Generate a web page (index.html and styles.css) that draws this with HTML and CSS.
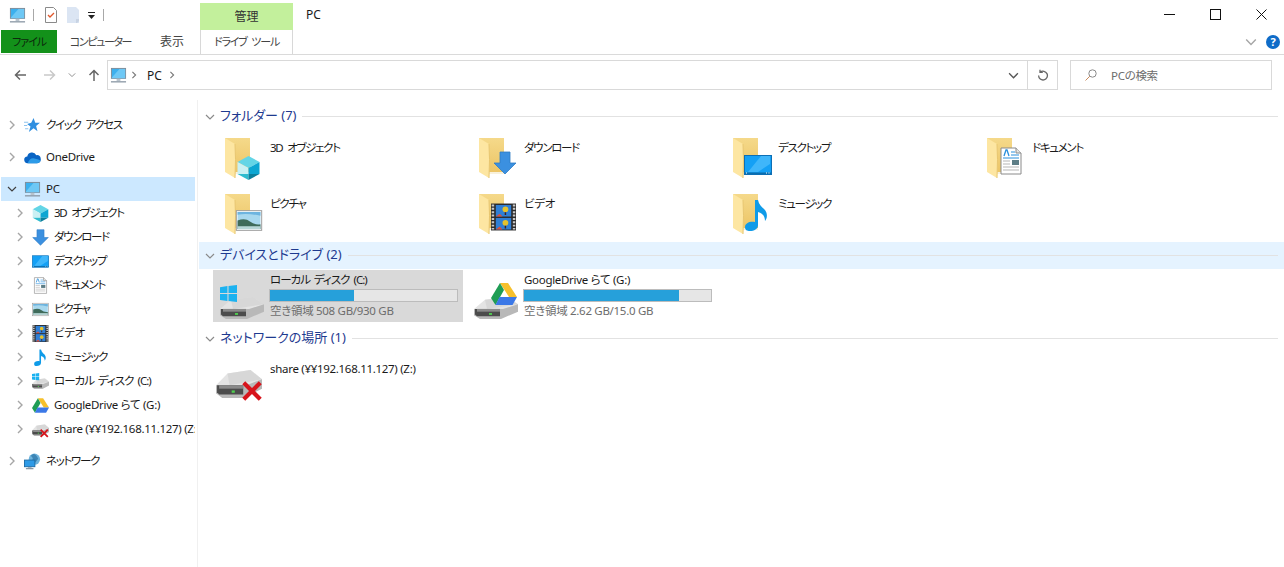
FILE: index.html
```html
<!DOCTYPE html>
<html lang="ja">
<head>
    <meta charset="UTF-8">
    <title>PC</title>
    <link rel="stylesheet" href="styles.css">
</head>
<body>
    <!-- Shared icons -->
    <svg class="sprites" xmlns="http://www.w3.org/2000/svg">
        <defs>
            <linearGradient id="folder-back" x1="0" y1="0" x2="0" y2="1">
                <stop offset="0" stop-color="#f5d98a"/>
                <stop offset="1" stop-color="#ecc566"/>
            </linearGradient>
        </defs>
        <symbol id="chev-r" viewBox="0 0 10 10"><path d="M3 1l4 4-4 4" fill="none" stroke="currentColor" stroke-width="1.4"/></symbol>
        <symbol id="chev-d" viewBox="0 0 10 10"><path d="M1 3l4 4 4-4" fill="none" stroke="currentColor" stroke-width="1.2"/></symbol>
        <symbol id="pc" viewBox="0 0 18 18">
            <rect x="1.5" y="1.5" width="15" height="10.5" fill="#3cb0ee" stroke="#7d8c99"/>
            <path d="M2 11l8-9h6v10H2z" fill="#6ec8f5"/>
            <rect x="7" y="12.5" width="4" height="2.5" fill="#b9c3cc"/>
            <rect x="1" y="15" width="16" height="1.4" fill="#8b99a6"/>
        </symbol>
        <symbol id="folder" viewBox="0 0 48 48">
            <path d="M3 3h25v34H3z" fill="url(#folder-back)"/>
            <path d="M13 37h15v2H13z" fill="#f8f1dc"/>
            <path d="M3 3l10 6q1 14 0 34L3 37z" fill="#fde6a2"/>
            <path d="M13 9q1 14 0 34" fill="none" stroke="#e8c670"/>
        </symbol>
        <symbol id="cube" viewBox="0 0 24 24">
            <path d="M12 0l11 6-11 6L1 6z" fill="#63d5e6"/>
            <path d="M1 6l11 6v6H1z" fill="#c9f0f3"/>
            <path d="M23 6l-11 6v6h11z" fill="#0ca6d2"/>
            <path d="M1 18h11v6z" fill="#2fbccf"/>
            <path d="M23 18H12v6z" fill="#0b7f9c"/>
        </symbol>
        <symbol id="arrow" viewBox="0 0 24 24">
            <path d="M7 1h10v11h6L12 23 1 12h6z" fill="#3b90e0" stroke="#2f7cc4" stroke-width=".8"/>
        </symbol>
        <symbol id="desktop" viewBox="0 0 28 20">
            <rect x=".5" y=".5" width="27" height="19" fill="#14a0f5" stroke="#0d6fb5"/>
            <path d="M4 17L17 1h9v8L14 17z" fill="#3fb6fa"/>
            <rect x="1" y="17.5" width="26" height="1.5" fill="#0b6dad"/>
            <path d="M2 18h1M22 18h1M24.500 18h1" stroke="#fff"/>
        </symbol>
        <symbol id="doc" viewBox="0 0 22 28">
            <path d="M1 1h15l5 5v21H1z" fill="#fff" stroke="#8a8a8a"/>
            <path d="M16 1v5h5" fill="#e4e4e4" stroke="#8a8a8a"/>
            <path d="M4 9l2-6h1l2 6" fill="none" stroke="#2a8fdc" stroke-width="1.3"/>
            <path d="M11 5h4M11 8h8M3 11h16" stroke="#2a8fdc"/>
            <path d="M3 14h7M3 17h7M3 20h16M3 23h16" stroke="#b5b5b5"/>
            <rect x="12" y="13" width="7" height="5" fill="#5d7d86"/>
        </symbol>
        <symbol id="picture" viewBox="0 0 28 22">
            <rect x=".7" y=".7" width="26.600" height="20.600" fill="#fff" stroke="#9a9a9a"/>
            <rect x="2" y="2" width="24" height="18" fill="#a8d8ee"/>
            <path d="M2 5q10-2 24 1v-4H2z" fill="#6db4df"/>
            <path d="M2 11q8-3 13 1t11 3v5H2z" fill="#3f6b5a"/>
            <path d="M2 17h24v3H2z" fill="#b7d6d6"/>
        </symbol>
        <symbol id="film" viewBox="0 0 26 28">
            <rect width="26" height="28" fill="#2c2c2c"/>
            <path d="M2 1v26M24 1v26" stroke="#c9c9c9" stroke-width="2.600" stroke-dasharray="2 1.500"/>
            <rect x="5" y="1.500" width="16" height="12" fill="#2f7fd6"/>
            <rect x="5" y="15" width="16" height="12" fill="#2f7fd6"/>
            <path d="M5 13.500l4-3 3 3zM5 27l4-3 3 3z" fill="#d8503c"/>
            <circle cx="15" cy="6" r="3" fill="#e5c22c"/>
            <circle cx="15" cy="20" r="3" fill="#e5c22c"/>
            <path d="M15 9v3M15 23v3" stroke="#402020" stroke-width="1.500"/>
        </symbol>
        <symbol id="note" viewBox="0 0 24 32">
            <path d="M10 1h3c1 5 4 7 7 10 3 4 2 9 0 11 0-4-2-8-7-9v13c0 4-4 6-8 6-3 0-5-1-5-4 0-4 5-6 10-5z" fill="#0f9be8"/>
        </symbol>
        <symbol id="star" viewBox="0 0 16 16">
            <path d="M9 1l1.600 4.500H15l-3.600 3 1.300 5L9 10.700 4.600 14l1.500-5L3 6.500l3.800-1z" fill="#2f8fe0"/>
            <path d="M0 5h4M0 8h3M1 11h3" stroke="#8fc4ee"/>
        </symbol>
        <symbol id="cloud" viewBox="0 0 18 12">
            <path d="M4 12a3.500 3.500 0 0 1-.5-7A5 5 0 0 1 13 3.500 4.200 4.200 0 0 1 14 12z" fill="#0a64c4"/>
            <path d="M4 12q2-6 7-5t6.500 2.500Q17 12 14 12z" fill="#2c9be8"/>
        </symbol>
        <symbol id="disk" viewBox="0 0 44 24" preserveAspectRatio="none">
            <path d="M0 13L11 3l22-3 11 8v8L11 24 0 20z" fill="#e4e4e4"/>
            <path d="M11 3l22-3 11 8-31 5z" fill="#d2d2d2" opacity=".7"/>
            <path d="M0 13h29l15-5v8L27 24H6l-6-4z" fill="#b8b8b8"/>
            <path d="M1 13h25v8H3l-2-2z" fill="#4c4c4c"/>
            <path d="M3 13h23v3H3z" fill="#8a8a8a"/>
            <rect x="15" y="17.500" width="3" height="2" fill="#4fd04f"/>
        </symbol>
        <symbol id="win" viewBox="0 0 16 16">
            <path d="M0 2l7-1v6.500H0zM8 1l8-1v7.500H8zM0 8.500h7V15l-7-1zM8 8.500h8V16l-8-1z" fill="#1cb2f0"/>
        </symbol>
        <symbol id="gdrive" viewBox="0 0 26 24">
            <path d="M9 1h8l9 14h-8z" fill="#f6c02c"/>
            <path d="M9 1l4 7-8.500 15L0 16z" fill="#1f9d55"/>
            <path d="M8.500 15H26l-4.500 8H4.500z" fill="#3b78e7"/>
        </symbol>
        <symbol id="redx" viewBox="0 0 24 24">
            <path d="M3 3l18 18M21 3L3 21" stroke="#d7141c" stroke-width="4.600"/>
        </symbol>
        <symbol id="globe" viewBox="0 0 18 18">
            <circle cx="11" cy="6.500" r="6" fill="#6db3dc"/>
            <path d="M7 3q3 2 2 4t3 3l3-4q-2-5-5-5z" fill="#3d85b5"/>
            <rect x=".5" y="7.500" width="11" height="7" fill="#2e9ae6" stroke="#1d6ea8"/>
            <rect x="4" y="15" width="4" height="1.200" fill="#9aa7b2"/>
            <rect x="2" y="16" width="8" height="1.200" fill="#7d8c99"/>
        </symbol>
    </svg>

    <!-- Title bar -->
    <header class="titlebar">
        <div class="qat">
            <svg class="qat-pc"><use href="#pc"/></svg>
            <span class="qat-sep"></span>
            <svg class="qat-doc" viewBox="0 0 12 16">
                <path d="M.5.500h8l3 3v12H.5z" fill="#fff" stroke="#8a8a8a"/>
                <path d="M3 8l2 2 4-4" fill="none" stroke="#e0562a" stroke-width="1.300"/>
            </svg>
            <svg class="qat-blank" viewBox="0 0 12 16">
                <path d="M0 0h9l3 3v13H0z" fill="#dbe5f3"/>
                <path d="M9 12h3v2l-2 2H9z" fill="#c8d3e3"/>
            </svg>
            <svg class="qat-drop" viewBox="0 0 7 7"><path d="M0 0h7v1H0zM0 3h7L3.500 7z" fill="#222"/></svg>
            <span class="qat-sep"></span>
        </div>
        <div class="manage-tab">管理</div>
        <div class="window-title">PC</div>
        <div class="window-btns">
            <div class="window-btn"><svg viewBox="0 0 11 11"><path d="M0 5.500h11" stroke="#111"/></svg></div>
            <div class="window-btn"><svg viewBox="0 0 11 11"><rect x=".5" y=".5" width="10" height="10" fill="none" stroke="#111"/></svg></div>
            <div class="window-btn"><svg viewBox="0 0 11 11"><path d="M.5.500l10 10M10.500.500l-10 10" stroke="#111"/></svg></div>
        </div>
    </header>

    <!-- Ribbon tabs -->
    <nav class="ribbon">
        <div class="tab tab-file">ファイル</div>
        <div class="tab tab-computer">コンピューター</div>
        <div class="tab tab-view">表示</div>
        <div class="tab tab-drive">ドライブ ツール</div>
        <div class="ribbon-right">
            <svg class="ribbon-chev"><use href="#chev-d"/></svg>
            <div class="help">?</div>
        </div>
    </nav>

    <!-- Address row -->
    <div class="addressrow">
        <svg class="nav-btn back" viewBox="0 0 12 12"><path d="M12 6H1.500M6 1.500L1.500 6 6 10.500" fill="none" stroke="currentColor" stroke-width="1.500"/></svg>
        <svg class="nav-btn forward" viewBox="0 0 12 12"><path d="M0 6h10.500M6 1.500L10.500 6 6 10.500" fill="none" stroke="currentColor" stroke-width="1.500"/></svg>
        <svg class="nav-recent"><use href="#chev-d"/></svg>
        <svg class="nav-btn up" viewBox="0 0 12 12"><path d="M6 12V1.500M1.500 6L6 1.500 10.500 6" fill="none" stroke="currentColor" stroke-width="1.500"/></svg>
        <div class="address">
            <svg class="address-pc"><use href="#pc"/></svg>
            <svg class="crumb-chev"><use href="#chev-r"/></svg>
            <span class="crumb">PC</span>
            <svg class="crumb-chev"><use href="#chev-r"/></svg>
            <svg class="address-drop"><use href="#chev-d"/></svg>
            <div class="refresh">
                <svg viewBox="0 0 12 12"><path d="M3.200 3.200A4.400 4.400 0 1 1 1.600 6.600M3 .8v2.600h2.800" fill="none" stroke="#666" stroke-width="1.300"/></svg>
            </div>
        </div>
        <div class="search">
            <svg viewBox="0 0 12 12"><circle cx="7.500" cy="4.500" r="3.700" fill="none" stroke="#8a8a8a"/><path d="M4.800 7.200L.5 11.500" stroke="#c98a5e"/></svg>
            <span>PCの検索</span>
        </div>
    </div>

    <div class="main">
        <!-- Navigation pane -->
        <aside class="navpane">
            <div class="navrow gap-after"><svg class="tree"><use href="#chev-r"/></svg><svg class="navicon"><use href="#star"/></svg><span class="kana">クイック アクセス</span></div>
            <div class="navrow gap-after"><svg class="tree"><use href="#chev-r"/></svg><svg class="navicon"><use href="#cloud"/></svg><span>OneDrive</span></div>
            <div class="navrow selected"><svg class="tree open"><use href="#chev-d"/></svg><svg class="navicon"><use href="#pc"/></svg><span>PC</span></div>
            <div class="navrow sub"><svg class="tree"><use href="#chev-r"/></svg><svg class="navicon"><use href="#cube"/></svg><span class="kana">3D オブジェクト</span></div>
            <div class="navrow sub"><svg class="tree"><use href="#chev-r"/></svg><svg class="navicon"><use href="#arrow"/></svg><span class="kana">ダウンロード</span></div>
            <div class="navrow sub"><svg class="tree"><use href="#chev-r"/></svg><svg class="navicon"><use href="#desktop"/></svg><span class="kana">デスクトップ</span></div>
            <div class="navrow sub"><svg class="tree"><use href="#chev-r"/></svg><svg class="navicon"><use href="#doc"/></svg><span class="kana">ドキュメント</span></div>
            <div class="navrow sub"><svg class="tree"><use href="#chev-r"/></svg><svg class="navicon"><use href="#picture"/></svg><span class="kana">ピクチャ</span></div>
            <div class="navrow sub"><svg class="tree"><use href="#chev-r"/></svg><svg class="navicon"><use href="#film"/></svg><span>ビデオ</span></div>
            <div class="navrow sub"><svg class="tree"><use href="#chev-r"/></svg><svg class="navicon"><use href="#note"/></svg><span class="kana">ミュージック</span></div>
            <div class="navrow sub">
                <svg class="tree"><use href="#chev-r"/></svg>
                <svg class="navicon" viewBox="0 0 16 16"><use href="#disk" y="5" width="16" height="10"/><use href="#win" width="7" height="7"/></svg>
                <span class="kana-mixed">ローカル ディスク (C:)</span>
            </div>
            <div class="navrow sub"><svg class="tree"><use href="#chev-r"/></svg><svg class="navicon"><use href="#gdrive"/></svg><span>GoogleDrive らて (G:)</span></div>
            <div class="navrow sub gap-after">
                <svg class="tree"><use href="#chev-r"/></svg>
                <svg class="navicon" viewBox="0 0 16 16"><use href="#disk" y="3" width="16" height="11"/><use href="#redx" x="7" y="7" width="9" height="9"/></svg>
                <span>share (¥¥192.168.11.127) (Z:)</span>
            </div>
            <div class="navrow"><svg class="tree"><use href="#chev-r"/></svg><svg class="navicon"><use href="#globe"/></svg><span class="kana">ネットワーク</span></div>
        </aside>

        <!-- Content -->
        <main class="content">
            <div class="group-head">
                <svg class="group-chev"><use href="#chev-d"/></svg>
                <span>フォルダー (7)</span><i></i>
            </div>
            <div class="folders">
                <div class="folder">
                    <svg viewBox="0 0 48 48"><use href="#folder" width="48" height="48"/><use href="#cube" x="14" y="21" width="25" height="24"/></svg>
                    <span class="kana">3D オブジェクト</span>
                </div>
                <div class="folder">
                    <svg viewBox="0 0 48 48"><use href="#folder" width="48" height="48"/><use href="#arrow" x="17" y="16" width="24" height="24"/></svg>
                    <span class="kana">ダウンロード</span>
                </div>
                <div class="folder">
                    <svg viewBox="0 0 48 48"><use href="#folder" width="48" height="48"/><use href="#desktop" x="14" y="20" width="28" height="20"/></svg>
                    <span class="kana">デスクトップ</span>
                </div>
                <div class="folder">
                    <svg viewBox="0 0 48 48"><use href="#folder" width="48" height="48"/><use href="#doc" x="16" y="12" width="22" height="28"/></svg>
                    <span class="kana">ドキュメント</span>
                </div>
                <div class="folder">
                    <svg viewBox="0 0 48 48"><use href="#folder" width="48" height="48"/><use href="#picture" x="13" y="19" width="28" height="21"/></svg>
                    <span class="kana">ピクチャ</span>
                </div>
                <div class="folder">
                    <svg viewBox="0 0 48 48"><use href="#folder" width="48" height="48"/><use href="#film" x="15" y="12" width="25" height="28"/></svg>
                    <span>ビデオ</span>
                </div>
                <div class="folder">
                    <svg viewBox="0 0 48 48"><use href="#folder" width="48" height="48"/><use href="#note" x="15" y="8" width="24" height="32"/></svg>
                    <span class="kana">ミュージック</span>
                </div>
            </div>

            <div class="group-head hot">
                <svg class="group-chev"><use href="#chev-d"/></svg>
                <span>デバイスとドライブ (2)</span><i></i>
            </div>
            <div class="drives">
                <div class="drive picked">
                    <svg viewBox="0 0 48 48"><use href="#disk" x="2" y="24" width="44" height="22"/><use href="#win" x="2" y="12" width="17" height="17"/></svg>
                    <div class="drive-info">
                        <div class="kana-mixed">ローカル ディスク (C:)</div>
                        <div class="bar"><div class="bar-fill" style="width: 45%"></div></div>
                        <div class="free">空き領域 508 GB/930 GB</div>
                    </div>
                </div>
                <div class="drive">
                    <svg viewBox="0 0 48 48"><use href="#disk" x="2" y="24" width="44" height="22"/><use href="#gdrive" x="19" y="9" width="26" height="24"/></svg>
                    <div class="drive-info">
                        <div>GoogleDrive らて (G:)</div>
                        <div class="bar"><div class="bar-fill" style="width: 83%"></div></div>
                        <div class="free">空き領域 2.62 GB/15.0 GB</div>
                    </div>
                </div>
            </div>

            <div class="group-head">
                <svg class="group-chev"><use href="#chev-d"/></svg>
                <span>ネットワークの場所 (1)</span><i></i>
            </div>
            <div class="drive network">
                <svg viewBox="0 0 48 48"><use href="#disk" x="1" y="10" width="46" height="28"/><use href="#redx" x="26" y="20" width="22" height="22"/></svg>
                <div class="drive-info"><div>share (¥¥192.168.11.127) (Z:)</div></div>
            </div>
        </main>
    </div>
</body>
</html>
```

FILE: styles.css
```css
body {
    margin: 0;
    width: 1284px;
    height: 567px;
    overflow: hidden;
    background-color: #fff;
    color: #1a1a1a;
    font-family: "Noto Sans", "Noto Sans CJK JP", sans-serif;
    font-size: 11.5px;
    letter-spacing: -0.3px;
    font-feature-settings: "palt";
}

svg {
    display: block;
    flex: none;
}

.sprites {
    width: 0;
    height: 0;
    position: absolute;
}

/* Katakana runs wider in this font than in the original UI font */
.kana {
    letter-spacing: -1.3px;
    word-spacing: 3px;
}

.kana-mixed {
    letter-spacing: -1px;
    word-spacing: 2px;
}

/* Title bar */
.titlebar {
    display: flex;
    height: 30px;
}

.qat {
    display: flex;
    align-items: center;
    width: 200px;
    padding-left: 9px;
    box-sizing: border-box;
}

.qat-pc {
    width: 17px;
    height: 17px;
}

.qat-sep {
    width: 1px;
    height: 12px;
    background-color: #a8a8a8;
    margin-left: 7px;
}

.qat-doc {
    width: 12px;
    height: 16px;
    margin-left: 11px;
}

.qat-blank {
    width: 12px;
    height: 16px;
    margin-left: 10px;
}

.qat-drop {
    width: 7px;
    height: 7px;
    margin-left: 9px;
    margin-right: 1px;
}

.manage-tab {
    width: 93px;
    height: 27px;
    margin-top: 3px;
    background-color: #c3f09c;
    text-align: center;
    line-height: 28px;
    color: #333;
    font-size: 12px;
    letter-spacing: 0;
}

.window-title {
    margin-left: 13px;
    line-height: 29px;
    font-size: 12px;
    letter-spacing: 0;
    flex: 1;
}

.window-btns {
    display: flex;
}

.window-btn {
    width: 46px;
    height: 30px;
    display: flex;
    align-items: center;
    justify-content: center;
}

.window-btn svg {
    width: 11px;
    height: 11px;
    margin-top: -2px;
}

/* Ribbon tabs */
.ribbon {
    display: flex;
    height: 24px;
    padding-left: 1px;
    border-bottom: 1px solid #dadada;
    color: #444;
}

.tab {
    height: 23px;
    line-height: 23px;
    text-align: center;
    box-sizing: border-box;
    font-size: 11px;
    letter-spacing: -1px;
}

.tab-file {
    width: 56px;
    background-color: #13911a;
    color: #0c2a0c;
}

.tab-computer {
    width: 87px;
    letter-spacing: -1.4px;
}

.tab-view {
    width: 56px;
    font-size: 12px;
    letter-spacing: 0;
}

.tab-drive {
    width: 93px;
    height: 24px;
    border-left: 1px solid #d8d8d8;
    border-right: 1px solid #d8d8d8;
    background-color: #fff;
    letter-spacing: -1.2px;
    word-spacing: 3px;
}

.ribbon-right {
    flex: 1;
    display: flex;
    justify-content: flex-end;
    align-items: center;
    padding-right: 4px;
    height: 24px;
}

.ribbon-chev {
    width: 12px;
    height: 12px;
    color: #a6a6a6;
    margin-right: 9px;
}

.help {
    width: 14px;
    height: 14px;
    border-radius: 50%;
    background-color: #0f6cc8;
    color: #fff;
    font-size: 11px;
    font-weight: bold;
    line-height: 14px;
    text-align: center;
}

/* Address row */
.addressrow {
    display: flex;
    align-items: center;
    height: 30px;
    padding: 5px 12px 10px 14px;
}

.nav-btn {
    width: 12px;
    height: 12px;
}

.back {
    color: #666;
}

.forward {
    color: #c9c9c9;
    margin-left: 18px;
}

.nav-recent {
    width: 8px;
    height: 8px;
    margin-left: 12px;
    color: #8c8c8c;
}

.up {
    color: #666;
    margin-left: 12px;
}

.address {
    display: flex;
    align-items: center;
    width: 951px;
    height: 30px;
    box-sizing: border-box;
    margin-left: 7px;
    border: 1px solid #d9d9d9;
    padding-left: 2px;
}

.address-pc {
    width: 17px;
    height: 17px;
}

.crumb-chev {
    width: 8px;
    height: 8px;
    margin-left: 3px;
    color: #777;
}

.crumb {
    margin-left: 9px;
    margin-right: 3px;
    font-size: 12px;
    letter-spacing: 0;
}

.address-drop {
    width: 11px;
    height: 11px;
    margin-left: auto;
    margin-right: 8px;
    color: #555;
}

.refresh {
    width: 30px;
    height: 28px;
    box-sizing: border-box;
    border-left: 1px solid #d9d9d9;
    display: flex;
    align-items: center;
    justify-content: center;
}

.refresh svg {
    width: 12px;
    height: 12px;
}

.search {
    display: flex;
    align-items: center;
    width: 202px;
    height: 30px;
    box-sizing: border-box;
    margin-left: 12px;
    padding-left: 14px;
    border: 1px solid #d9d9d9;
    color: #6d6d6d;
}

.search svg {
    width: 12px;
    height: 12px;
    margin-right: 14px;
}

/* Main area */
.main {
    display: flex;
    height: 467px;
}

.navpane {
    width: 198px;
    box-sizing: border-box;
    flex: none;
    border-right: 1px solid #f0f0f0;
    padding: 13px 2px 0 1px;
    overflow: hidden;
}

.navrow {
    display: flex;
    align-items: center;
    height: 24px;
    white-space: nowrap;
    overflow: hidden;
    padding-left: 6px;
}

.navrow span {
    padding-bottom: 2px;
}

.navrow.gap-after {
    margin-bottom: 8px;
}

.navrow.selected {
    background-color: #cce8ff;
}

.navrow.sub {
    padding-left: 14px;
}

.tree {
    width: 10px;
    height: 10px;
    color: #a6a6a6;
    flex: none;
}

.tree.open {
    color: #404040;
}

.navicon {
    width: 17px;
    height: 17px;
    margin-left: 7px;
    margin-right: 5px;
}

.content {
    flex: 1;
    padding: 3px 0 0 1px;
}

.group-head {
    display: flex;
    align-items: center;
    height: 27px;
    padding-left: 6px;
    color: #1e3a8f;
    font-size: 13px;
    letter-spacing: 0;
}

.group-head span {
    padding-bottom: 4px;
}

.group-head.hot {
    background-color: #e5f3ff;
}

.group-chev {
    width: 10px;
    height: 10px;
    color: #8a8a8a;
    margin-right: 5px;
}

.group-head i {
    flex: 1;
    height: 1px;
    margin: 0 6px;
    background-color: #e2e2e2;
}

.folders {
    display: grid;
    grid-template-columns: repeat(4, 254px);
    grid-auto-rows: 56px;
    padding-left: 23px;
    height: 112px;
}

.folder {
    display: flex;
    padding-top: 5px;
}

.folder svg {
    width: 48px;
    height: 48px;
}

.folder span {
    margin-top: 4px;
}

.drives {
    display: flex;
    gap: 4px;
    padding-left: 14px;
    margin-top: 1px;
    margin-bottom: 3px;
}

.drive {
    display: flex;
    width: 250px;
    height: 52px;
    box-sizing: border-box;
    padding-left: 5px;
    align-items: flex-start;
}

.drive.picked {
    background-color: #d9d9d9;
}

.drive svg {
    width: 48px;
    height: 48px;
    margin-top: 3px;
}

.drive-info {
    margin-left: 4px;
    width: 188px;
    padding-top: 1px;
    line-height: 18px;
}

.bar {
    height: 13px;
    box-sizing: border-box;
    margin-left: -1px;
    border: 1px solid #bcbcbc;
    background-color: #e6e6e6;
}

.bar-fill {
    height: 11px;
    background-color: #26a0da;
}

.free {
    color: #6d6d6d;
}

.network {
    margin: 5px 0 0 14px;
    width: 400px;
    padding-left: 2px;
}

.network .drive-info {
    width: 300px;
    margin-top: 2px;
    margin-left: 7px;
}
```
